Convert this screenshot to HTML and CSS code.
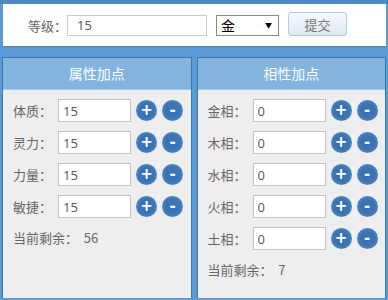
FILE: index.html
```html
<!DOCTYPE html>
<html lang="zh-CN">
<head>
<meta charset="utf-8">
<link rel="stylesheet" href="styles.css">
</head>
<body>
<div class="page">
  <div class="topbar">
    <span class="top-label">等级：</span>
    <input class="top-input" type="text" value="15">
    <span class="select-wrap">
      <select class="top-select"><option>金</option></select>
    </span>
    <button class="submit">提交</button>
  </div>
  <div class="panels">
    <div class="panel">
      <div class="panel-head">属性加点</div>
      <div class="panel-body">
        <div class="row"><span class="label">体质：</span><input class="val" value="15"><span class="btn">+</span><span class="btn">-</span></div>
        <div class="row"><span class="label">灵力：</span><input class="val" value="15"><span class="btn">+</span><span class="btn">-</span></div>
        <div class="row"><span class="label">力量：</span><input class="val" value="15"><span class="btn">+</span><span class="btn">-</span></div>
        <div class="row"><span class="label">敏捷：</span><input class="val" value="15"><span class="btn">+</span><span class="btn">-</span></div>
        <div class="remain">当前剩余：&nbsp; 56</div>
      </div>
    </div>
    <div class="panel">
      <div class="panel-head">相性加点</div>
      <div class="panel-body">
        <div class="row"><span class="label">金相：</span><input class="val" value="0"><span class="btn">+</span><span class="btn">-</span></div>
        <div class="row"><span class="label">木相：</span><input class="val" value="0"><span class="btn">+</span><span class="btn">-</span></div>
        <div class="row"><span class="label">水相：</span><input class="val" value="0"><span class="btn">+</span><span class="btn">-</span></div>
        <div class="row"><span class="label">火相：</span><input class="val" value="0"><span class="btn">+</span><span class="btn">-</span></div>
        <div class="row"><span class="label">土相：</span><input class="val" value="0"><span class="btn">+</span><span class="btn">-</span></div>
        <div class="remain">当前剩余：&nbsp; 7</div>
      </div>
    </div>
  </div>
</div>
</body>
</html>
```
FILE: styles.css
```css
html, body {
  margin: 0;
  padding: 0;
  height: 300px;
  overflow: hidden;
}
body {
  background: #5b9bd5;
  font-family: "Noto Sans CJK SC", "Noto Sans", sans-serif;
  color: #666;
}
.page {
  border-top: 4px solid #4d89c4;
  padding: 0 2px 0 3px;
}
.topbar {
  height: 42px;
  background: #fff;
  box-shadow: 0 1px 1px rgba(0,0,0,0.15);
  display: flex;
  align-items: center;
  padding-left: 25px;
  box-sizing: border-box;
}
.top-label {
  font-size: 13px;
  width: 39px;
  color: #666;
}
.top-input {
  width: 140px;
  height: 21px;
  box-sizing: border-box;
  border: 1px solid #c9c9c9;
  padding: 0 0 0 9px;
  font-family: "Open Sans", sans-serif;
  font-size: 13px;
  color: #555;
  outline: none;
}
.select-wrap {
  position: relative;
  margin-left: 9px;
  display: inline-block;
}
.select-wrap::after {
  content: "▼";
  position: absolute;
  right: 7px;
  top: 5px;
  font-size: 7px;
  color: #000;
  pointer-events: none;
}
.top-select {
  appearance: none;
  -webkit-appearance: none;
  width: 63px;
  height: 21px;
  border: 1px solid #888;
  border-radius: 0;
  background: #fff;
  font-family: "Noto Sans CJK SC", sans-serif;
  font-size: 14px;
  color: #000;
  padding: 0 0 0 4px;
  line-height: 19px;
  display: block;
}
.submit {
  margin-left: 9px;
  width: 59px;
  height: 24px;
  border: 1px solid #b3cbe0;
  border-radius: 3px;
  background: linear-gradient(#f7fafd, #dde8f2);
  font-family: "Noto Sans CJK SC", sans-serif;
  font-size: 13px;
  color: #777;
  padding: 0;
  margin-top: -2px;
}
.panels {
  display: flex;
  gap: 5px;
  margin-top: 11px;
  margin-left: -1px;
}
.panel {
  flex: 1;
  height: 241px;
  border: 1px solid #3e77b0;
  border-bottom: none;
  background: #eeeeee;
  box-sizing: border-box;
}
.panel-head {
  height: 31px;
  line-height: 31px;
  text-align: center;
  background: #82b4de;
  border-bottom: 1px solid #a9c9e6;
  color: #fff;
  font-size: 14px;
}
.panel-body {
  padding: 9px 0 0 10px;
}
.row {
  display: flex;
  align-items: center;
  height: 23px;
  margin-bottom: 9px;
}
.label {
  width: 45px;
  font-size: 13px;
  color: #666;
}
.val {
  width: 73px;
  height: 23px;
  box-sizing: border-box;
  border: 1px solid #c4c4c4;
  padding: 0 0 0 4px;
  font-family: "Open Sans", sans-serif;
  font-size: 13px;
  color: #555;
  background: #fff;
  outline: none;
}
.btn {
  width: 21px;
  height: 21px;
  border-radius: 50%;
  margin-left: 5px;
  background: radial-gradient(circle, #3a73b3 45%, #4a83c2 70%, #8bb4de 100%);
  color: #fff;
  font-family: "DejaVu Sans", sans-serif;
  font-weight: bold;
  font-size: 15px;
  line-height: 21px;
  text-align: center;
}
.remain {
  font-size: 13px;
  color: #666;
  line-height: 22px;
}
```
